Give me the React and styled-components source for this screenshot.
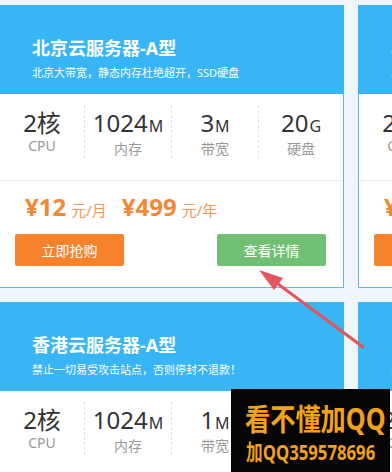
import React from 'react';
import styled, { createGlobalStyle } from 'styled-components';

const GlobalStyle = createGlobalStyle`
  html, body {
    margin: 0;
    padding: 0;
    background: #eef6fb;
    overflow: hidden;
  }
  body {
    font-family: "Noto Sans", "Noto Sans CJK SC", sans-serif;
  }
`;

const Page = styled.div`
  position: relative;
  width: 392px;
  height: 472px;
  overflow: hidden;
`;

const Grid = styled.div`
  display: grid;
  grid-template-columns: 345px 345px;
  column-gap: 14px;
  row-gap: 14px;
  padding-top: 5px;
  margin-left: -1px;
`;

const Card = styled.div`
  width: 345px;
  height: 283px;
  display: flex;
  flex-direction: column;
`;

const Header = styled.div`
  height: 89px;
  background: #38b5f4;
  padding: 31px 0 0 33px;
  box-sizing: border-box;
  color: #fff;
`;

const Title = styled.div`
  font-size: 18px;
  font-weight: 700;
  line-height: 24px;
`;

const Subtitle = styled.div`
  margin-top: 5px;
  font-size: 11px;
  line-height: 16px;
`;

const Body = styled.div`
  flex: 1;
  background: #fff;
  border: 1px solid #6eb4d8;
  border-top: none;
  display: flex;
  flex-direction: column;
`;

const Specs = styled.div`
  display: grid;
  grid-template-columns: 84px 87px 87px 1fr;
  height: 86px;
  border-bottom: 1px solid #ececec;
`;

const Spec = styled.div`
  margin: 11px 0 22px;
  padding-top: 4px;
  display: flex;
  flex-direction: column;
  align-items: center;
  border-left: ${(p) => (p.first ? 'none' : '1px dashed #e2e2e2')};
`;

const Value = styled.div`
  font-size: 24px;
  line-height: 28px;
  color: #333;
  small {
    font-size: 16px;
    margin-left: 1px;
  }
`;

const Label = styled.div`
  font-size: 14px;
  line-height: 18px;
  color: #999;
`;

const PriceRow = styled.div`
  display: flex;
  align-items: baseline;
  padding: 13px 0 0 25px;
  line-height: 26px;
  color: #f08838;
`;

const Price = styled.span`
  font-size: 24px;
  font-weight: 700;
  margin-left: ${(p) => (p.spaced ? '15px' : '0')};
`;

const Unit = styled.span`
  font-size: 15px;
  margin-left: 5px;
  color: #f0995a;
`;

const Buttons = styled.div`
  display: flex;
  justify-content: space-between;
  padding: 0 17px 0 15px;
  margin-top: 11px;
`;

const Button = styled.div`
  width: 109px;
  height: 32px;
  border-radius: 2px;
  background: ${(p) => (p.green ? '#71bf73' : '#f7822c')};
  color: #fff;
  font-size: 14px;
  display: flex;
  align-items: center;
  justify-content: center;
`;

const Arrow = styled.svg`
  position: absolute;
  left: 0;
  top: 0;
  pointer-events: none;
`;

const Watermark = styled.div`
  position: absolute;
  left: 231px;
  top: 389px;
  width: 159px;
  height: 83px;
  background: #050505;
  color: #f2a11d;
  font-weight: 700;
  overflow: hidden;
`;

const WmLine = styled.div`
  white-space: nowrap;
  transform-origin: left center;
  transform: scaleX(${(p) => p.sx});
  font-size: ${(p) => p.size}px;
  line-height: ${(p) => p.lh}px;
  margin-left: ${(p) => p.left}px;
  margin-top: ${(p) => p.top}px;
`;

const cards = [
  { title: '北京云服务器-A型', sub: '北京大带宽，静态内存杜绝超开，SSD硬盘', bw: '3' },
  { title: '北京云服务器-B型', sub: '北京大带宽，静态内存杜绝超开，SSD硬盘', bw: '5' },
  { title: '香港云服务器-A型', sub: '禁止一切易受攻击站点，否则停封不退款！', bw: '1' },
  { title: '香港云服务器-B型', sub: '禁止一切易受攻击站点，否则停封不退款！', bw: '2' },
];

const ServerCard = ({ data }) => (
  <Card>
    <Header>
      <Title>{data.title}</Title>
      <Subtitle>{data.sub}</Subtitle>
    </Header>
    <Body>
      <Specs>
        <Spec first>
          <Value>2核</Value>
          <Label>CPU</Label>
        </Spec>
        <Spec>
          <Value>1024<small>M</small></Value>
          <Label>内存</Label>
        </Spec>
        <Spec>
          <Value>{data.bw}<small>M</small></Value>
          <Label>带宽</Label>
        </Spec>
        <Spec>
          <Value>20<small>G</small></Value>
          <Label>硬盘</Label>
        </Spec>
      </Specs>
      <PriceRow>
        <Price>¥12</Price>
        <Unit>元/月</Unit>
        <Price spaced>¥499</Price>
        <Unit>元/年</Unit>
      </PriceRow>
      <Buttons>
        <Button>立即抢购</Button>
        <Button green>查看详情</Button>
      </Buttons>
    </Body>
  </Card>
);

export default function App() {
  return (
    <Page>
      <GlobalStyle />
      <Grid>
        {cards.map((c, i) => (
          <ServerCard key={i} data={c} />
        ))}
      </Grid>
      <Arrow width="392" height="472" viewBox="0 0 392 472">
        <line x1="278" y1="284" x2="363" y2="347" stroke="#e4545d" strokeWidth="3" strokeLinecap="round" />
        <polygon points="259,270 274,290 283,278" fill="#e4545d" />
      </Arrow>
      <Watermark>
        <WmLine size={30} lh={36} left={14} top={12} sx={0.84}>看不懂加QQ</WmLine>
        <WmLine size={22} lh={28} left={15} top={0} sx={0.76}>加QQ359578696</WmLine>
      </Watermark>
    </Page>
  );
}
